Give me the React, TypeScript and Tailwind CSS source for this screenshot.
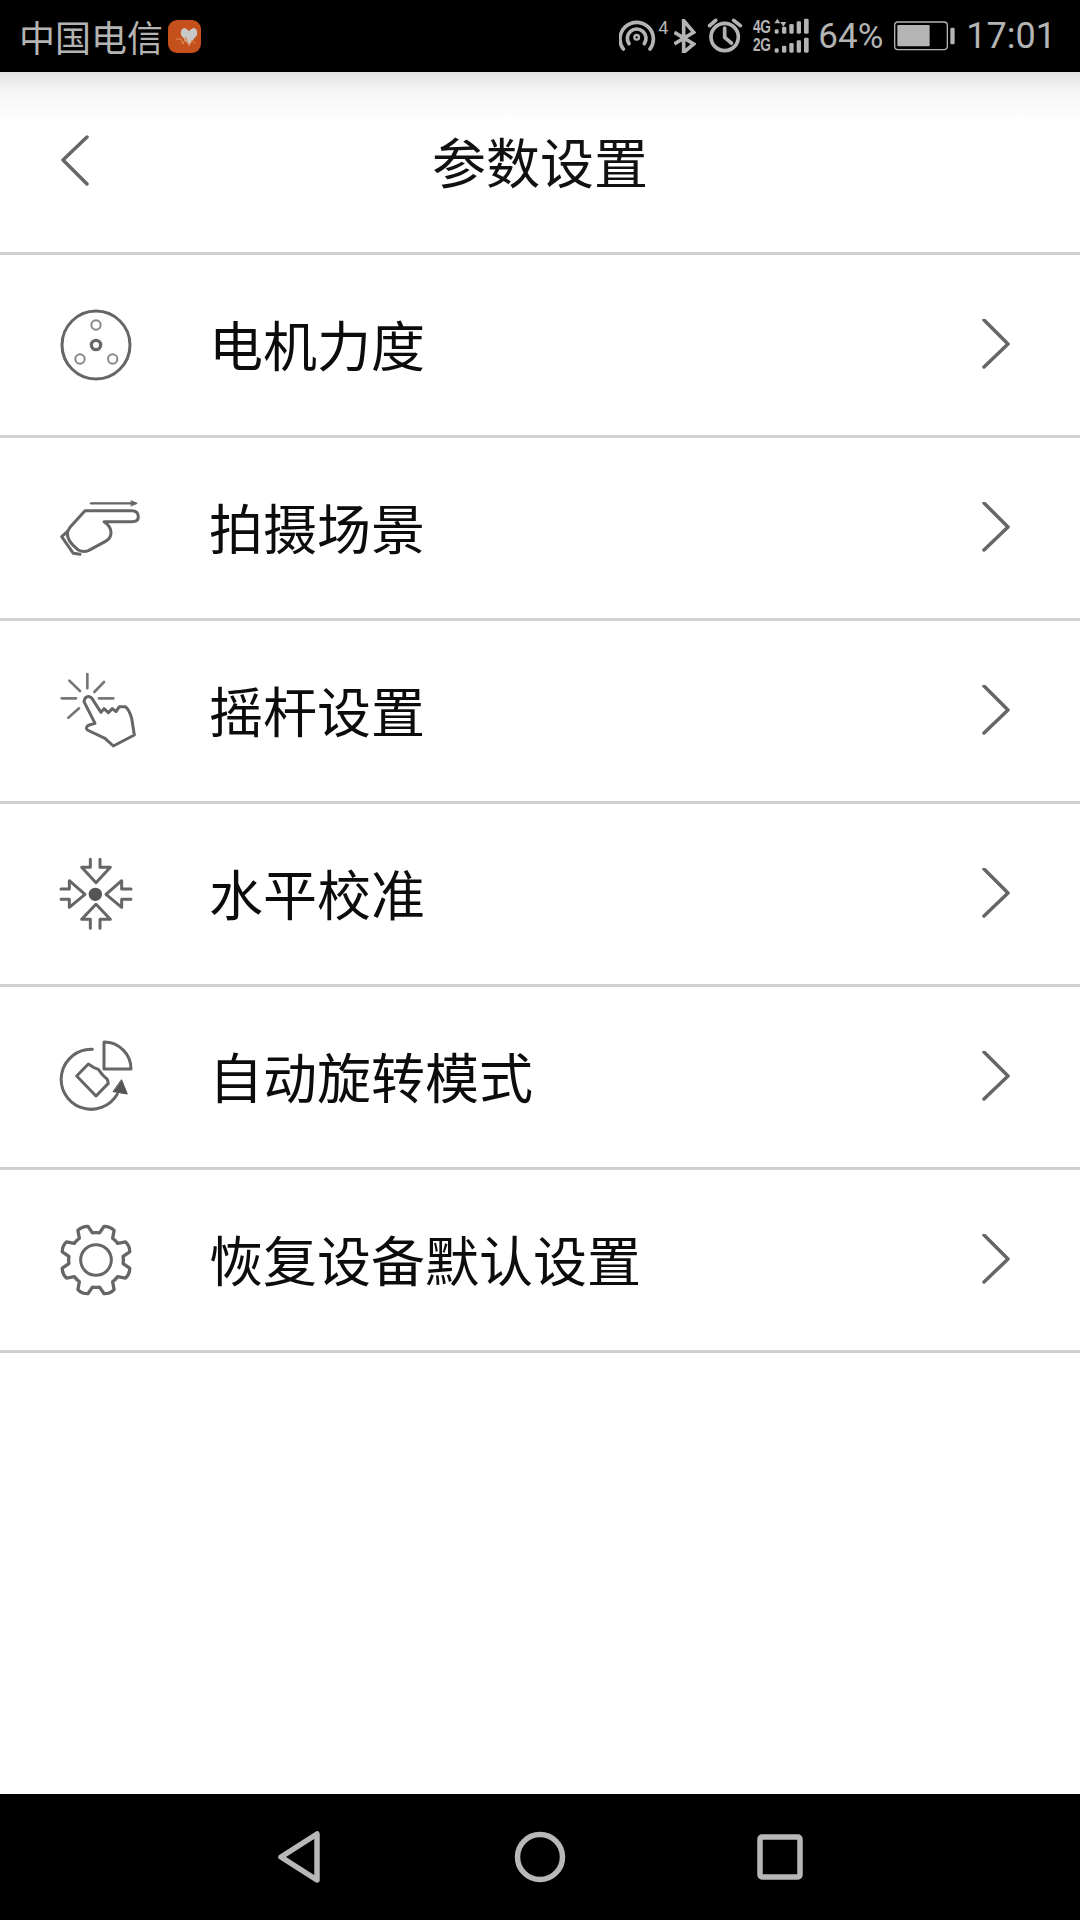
import React from "react";

const cjk = '"Noto Sans CJK SC", sans-serif';

// most icons below are traced from the reference at 3x, so a 240 unit box is drawn at 80px
const IconBox = ({ cx, cy, children }: { cx: number; cy: number; children: React.ReactNode }) => (
  <svg
    className="overflow-visible"
    width={80}
    height={80}
    viewBox={`${cx - 120} ${cy - 120} 240 240`}
    fill="none"
    stroke="#666666"
    strokeWidth={9}
    strokeLinecap="round"
    strokeLinejoin="round"
  >
    {children}
  </svg>
);

const MotorIcon = () => (
  <IconBox cx={198} cy={165}>
    <circle cx={198} cy={165} r={102} strokeWidth={9} />
    <circle cx={198} cy={105} r={14} strokeWidth={6} stroke="#888888" />
    <circle cx={150} cy={207} r={14} strokeWidth={6} stroke="#888888" />
    <circle cx={248} cy={207} r={14} strokeWidth={6} stroke="#888888" />
    <circle cx={198} cy={165} r={14} strokeWidth={10} />
  </IconBox>
);

const SceneIcon = () => (
  <IconBox cx={198} cy={714}>
    <path d="M183 640H316" strokeWidth={7} />
    <path d="M304 632L322 640L304 648Z" fill="#666666" strokeWidth={2} />
    <path d="M165 662H305Q325 662 325 680Q325 695 305 695H222Q243 708 243 728Q243 745 225 755L175 782Q160 788 145 780Q120 760 115 745Q108 728 120 712Z" />
    <path d="M112 725L95 740L130 790L150 793" />
  </IconBox>
);

const StickIcon = () => (
  <IconBox cx={198} cy={153}>
    <path d="M172 42V85M118 62L150 93M222 66L193 96M95 115H138M207 115H250M115 173L147 145" strokeWidth={8} stroke="#777777" />
    <path d="M162 125Q165 108 178 110Q187 112 192 125L213 157L222 146L235 158L247 146L258 155L268 140H286Q298 150 305 175L313 225L250 258L225 235L172 210Q165 200 178 195L195 190Z" />
  </IconBox>
);

const LevelIcon = () => (
  <IconBox cx={195} cy={702}>
    <circle cx={193} cy={703} r={20} fill="#555555" stroke="none" />
    <path d="M178 598V622H152L195 668L238 622H207V598" />
    <path d="M178 805V778H152L195 733L238 778H207V805" />
    <path d="M90 687H115V662L162 703L115 742V718H90" />
    <path d="M300 687H272V662L225 703L272 742V718H300" />
  </IconBox>
);

const RotateIcon = () => (
  <IconBox cx={198} cy={171}>
    <path d="M187 88A90 90 0 1 0 262 222" />
    <path d="M275 180L292 222L250 215Z" fill="#555555" stroke="#555555" strokeWidth={3} />
    <path d="M222 66V147H303A81 81 0 0 0 222 66Z" />
    <path d="M175 132L140 168L198 228L235 190L232 178L218 165L205 148L190 142Z" />
  </IconBox>
);

// gear teeth sit on an 8 step ring, offset so that two point straight up
const gearPath = (() => {
  const cx = 198;
  const cy = 720;
  const pt = (r: number, deg: number) => {
    const a = (deg * Math.PI) / 180;
    return `${(cx + r * Math.cos(a)).toFixed(1)} ${(cy + r * Math.sin(a)).toFixed(1)}`;
  };
  let d = "";
  for (let i = 0; i < 8; i++) {
    const m = 22.5 + i * 45;
    d += `${i === 0 ? "M" : "L"}${pt(82, m - 15)}L${pt(104, m - 9)}Q${pt(110, m)} ${pt(104, m + 9)}L${pt(82, m + 15)}`;
    d += `A82 82 0 0 1 ${pt(82, m + 30)}`;
  }
  return d + "Z";
})();

const ResetIcon = () => (
  <IconBox cx={198} cy={720}>
    <path d={gearPath} strokeWidth={10} />
    <circle cx={198} cy={720} r={46} strokeWidth={9} />
  </IconBox>
);

const Chevron = ({ left }: { left?: boolean }) => (
  <svg width={30} height={52} viewBox="0 0 30 52" fill="none" stroke="#666666" strokeWidth={3.5} strokeLinecap="round" strokeLinejoin="round">
    <path d={left ? "M27 2L3 25L27 49" : "M4 1L28 25L4 48"} />
  </svg>
);

const rows = [
  { label: "电机力度", icon: <MotorIcon /> },
  { label: "拍摄场景", icon: <SceneIcon /> },
  { label: "摇杆设置", icon: <StickIcon /> },
  { label: "水平校准", icon: <LevelIcon /> },
  { label: "自动旋转模式", icon: <RotateIcon /> },
  { label: "恢复设备默认设置", icon: <ResetIcon /> },
];

const StatusBar = () => (
  <div className="h-[72px] bg-black flex items-center pl-[19px] pr-[24px] text-[#b4b4b4]" style={{ fontFamily: '"Roboto", "Noto Sans CJK SC", sans-serif' }}>
    <span className="text-[36px] leading-none" style={{ fontFamily: cjk }}>中国电信</span>
    <svg className="ml-[5px]" width={33} height={33} viewBox="0 0 33 33">
      <rect width={33} height={33} rx={9} fill="#c4511c" />
      <path d="M21 25L13 15Q12 8 17 8L21 11L25 8Q30 8 29 15Z" fill="#c8c8c8" />
      <path d="M8 19H13L15 24L18 17L21 26L24 20L27 24" fill="none" stroke="#e08a58" strokeWidth={1} />
    </svg>
    <div className="ml-auto flex items-center">
      <svg width={37} height={34} viewBox="70 58 111 102" fill="none" stroke="#b4b4b4" strokeLinecap="round">
        <path d="M83 148A50 50 0 1 1 163 148" strokeWidth={11} />
        <path d="M100 132A28 28 0 1 1 146 132" strokeWidth={11} />
        <circle cx={123} cy={113} r={7} strokeWidth={7} />
      </svg>
      <span className="text-[18px] leading-none self-start mt-[1px] ml-[2px]">4</span>
      <svg className="ml-[6px]" width={22} height={34} viewBox="239 60 66 102" fill="none" stroke="#b4b4b4" strokeWidth={11}>
        <path d="M240 100L298 135L268 160V65L298 100L240 135" />
      </svg>
      <svg className="ml-[11px]" width={36} height={36} viewBox="332 55 108 108" fill="none" stroke="#b4b4b4" strokeWidth={11} strokeLinecap="round">
        <circle cx={385} cy={112} r={41} />
        <path d="M385 85V113L405 130M340 78L358 62M432 78L412 62" />
      </svg>
      <div className="ml-[10px] w-[18px] flex flex-col font-bold text-[19px] leading-[18px] origin-left scale-x-[0.72] tracking-[-0.5px]" style={{ fontFamily: '"Liberation Sans", sans-serif' }}>
        <span>4G</span>
        <span>2G</span>
      </div>
      <svg className="ml-[2px]" width={38} height={36} viewBox="535 52 114 108" fill="#b4b4b4">
        <path d="M548 54L557 68H539ZM566 78L575 64H557Z" />
        <rect x={540} y={86} width={12} height={13} rx={4} />
        <rect x={562} y={78} width={13} height={21} rx={4} />
        <rect x={584} y={70} width={13} height={29} rx={4} />
        <rect x={606} y={62} width={13} height={37} rx={4} />
        <rect x={628} y={54} width={14} height={45} rx={4} />
        <rect x={540} y={143} width={12} height={13} rx={4} />
        <rect x={562} y={135} width={13} height={21} rx={4} />
        <rect x={584} y={127} width={13} height={29} rx={4} />
        <rect x={606} y={119} width={13} height={37} rx={4} />
        <rect x={628} y={111} width={14} height={45} rx={4} />
      </svg>
      <span className="ml-[7px] text-[35px] leading-none">64%</span>
      <svg className="ml-[11px]" width={61} height={30} viewBox="888 62 183 90" fill="none">
        <rect x={890} y={65} width={158} height={83} rx={10} stroke="#b4b4b4" strokeWidth={4} />
        <rect x={898} y={74} width={97} height={64} rx={3} fill="#b4b4b4" />
        <rect x={1057} y={82} width={13} height={50} rx={4} fill="#b4b4b4" />
      </svg>
      <span className="ml-[11px] text-[36px] leading-none">17:01</span>
    </div>
  </div>
);

const App = () => {
  return (
    <div className="w-[1080px] h-[1920px] flex flex-col bg-white" style={{ fontFamily: cjk }}>
      <StatusBar />
      <div className="h-[183px] shrink-0 border-b-[3px] border-[#d0d0d0] relative flex items-center justify-center bg-[linear-gradient(#e4e4e4,#f5f5f5_20px,#ffffff_50px)]">
        <div className="absolute left-[60px] top-[63px]">
          <Chevron left />
        </div>
        <span className="text-[54px] leading-none text-[#111111] mt-[-3px]">参数设置</span>
      </div>
      <div className="flex-1 flex flex-col">
        {rows.map((row) => (
          <div key={row.label} className="h-[183px] shrink-0 border-b-[3px] border-[#d0d0d0] flex items-center pl-[56px] pr-[70px]">
            {row.icon}
            <span className="ml-[73px] mt-[-3px] text-[54px] leading-none text-[#0c0c0c]">{row.label}</span>
            <div className="ml-auto">
              <Chevron />
            </div>
          </div>
        ))}
      </div>
      <div className="h-[126px] shrink-0 bg-black flex items-center justify-center gap-[180px]">
        <svg width={60} height={60} viewBox="0 0 60 60" fill="none" stroke="#b8b8b8" strokeWidth={5.5} strokeLinejoin="round">
          <path d="M47 7V53L11 30Z" />
        </svg>
        <svg width={60} height={60} viewBox="0 0 60 60" fill="none" stroke="#b8b8b8" strokeWidth={5.5}>
          <circle cx={30} cy={30} r={22.5} />
        </svg>
        <svg width={60} height={60} viewBox="0 0 60 60" fill="none" stroke="#b8b8b8" strokeWidth={5.5} strokeLinejoin="round">
          <rect x={10} y={10} width={40} height={40} rx={2} />
        </svg>
      </div>
    </div>
  );
};

export default App;
